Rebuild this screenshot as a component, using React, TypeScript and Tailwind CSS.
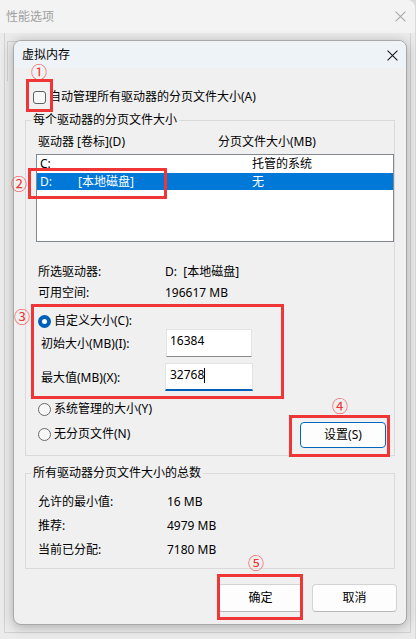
const font = "font-['Noto_Sans','Noto_Sans_CJK_SC',sans-serif]";

function Radio({ checked }: { checked?: boolean }) {
  if (checked) {
    return (
      <span className="w-[13px] h-[13px] rounded-full bg-[#005fb8] flex items-center justify-center shrink-0">
        <span className="w-[5px] h-[5px] rounded-full bg-white" />
      </span>
    );
  }
  return <span className="w-[13px] h-[13px] rounded-full border border-[#6a6a6a] bg-[#f7f7f7] shrink-0" />;
}

function CloseIcon({ color, size }: { color: string; size: number }) {
  return (
    <svg width={size} height={size} viewBox="0 0 10 10">
      <path d="M0.5 0.5 L9.5 9.5 M9.5 0.5 L0.5 9.5" stroke={color} strokeWidth="1" />
    </svg>
  );
}

function Mark({ className }: { className: string }) {
  return <div className={`absolute border-[3px] border-[#ef3535] ${className}`} />;
}

function Num({ className, n }: { className: string; n: string }) {
  return (
    <div className={`absolute font-['Noto_Sans_CJK_SC',sans-serif] text-[16px] leading-[13px] text-[#ef3535] ${className}`}>
      {n}
    </div>
  );
}

const info = [
  ["允许的最小值:", "16 MB"],
  ["推荐:", "4979 MB"],
  ["当前已分配:", "7180 MB"],
];

export default function App() {
  return (
    <div className={`relative w-[416px] h-[639px] overflow-hidden bg-[#d9d9d9] text-[12px] leading-[16px] text-black ${font}`}>
      {/* background window: 性能选项 */}
      <div className="w-[415px] h-full rounded-tr-[8px] bg-[#ebebeb] flex flex-col">
        <div className="h-[33px] bg-[#f3f3f3] rounded-tr-[8px] flex items-center justify-between pl-[6px] pr-[9px]">
          <span className="text-[#a0a0a0]">性能选项</span>
          <CloseIcon color="#a8a8a8" size={11} />
        </div>
        <div className="flex-1 px-[4px] pb-[6px]">
          <div className="h-full border-l border-b border-r border-[#d2d2d2] pt-[8px] pl-[2px]">
            <div className="w-[30px] h-[40px] border-l border-t border-[#d0d0d0]" />
          </div>
        </div>
      </div>

      {/* dialog: 虚拟内存 */}
      <div className="absolute left-[13px] top-[40px] w-[394px] h-[585px] rounded-[8px] border border-[#a8a8a8] bg-[#f0f0f0] shadow-[0_2px_12px_rgba(0,0,0,0.28)] overflow-hidden flex flex-col">
        <div className="h-[27px] bg-[#eef3f8] flex items-center justify-between pl-[8px] pr-[8px] pt-[1px]">
          <span className="leading-[12px]">虚拟内存</span>
          <CloseIcon color="#1a1a1a" size={11} />
        </div>

        <div className="flex items-center mt-[21px] ml-[19px] h-[16px]">
          <span className="w-[13px] h-[13px] rounded-[3px] border border-[#5f5f5f] bg-[#f7f7f7]" />
          <span className="ml-[3px]">自动管理所有驱动器的分页文件大小(A)</span>
        </div>

        <fieldset className="mt-[7px] mx-[11px] border border-[#dadada] pl-[5px] pb-[7px]">
          <legend className="px-[2px] leading-[16px]">每个驱动器的分页文件大小</legend>
          <div className="flex mt-[6px] ml-[7px]">
            <span className="w-[180px]">驱动器 [卷标](D)</span>
            <span>分页文件大小(MB)</span>
          </div>
          <div className="mt-[4px] ml-[5px] h-[88px] border border-[#828790] bg-white">
            <div className="flex h-[18px] items-center pl-[3px]">
              <span className="w-[212px]">C:</span>
              <span>托管的系统</span>
            </div>
            <div className="flex h-[17px] items-center pl-[3px] bg-[#0078d7] text-white">
              <span className="w-[38px]">D:</span>
              <span className="w-[174px]">[本地磁盘]</span>
              <span>无</span>
            </div>
          </div>

          <div className="flex mt-[22px] ml-[7px]">
            <span className="w-[127px]">所选驱动器:</span>
            <span>D:&nbsp;&nbsp;[本地磁盘]</span>
          </div>
          <div className="flex mt-[5px] ml-[7px]">
            <span className="w-[127px]">可用空间:</span>
            <span>196617 MB</span>
          </div>

          <div className="flex items-end justify-between">
            <div className="flex flex-col pb-[6px]">
              <div className="flex items-center mt-[12px] ml-[7px] h-[16px]">
                <Radio checked />
                <span className="ml-[3px]">自定义大小(C):</span>
              </div>
              <div className="flex items-center ml-[10px] h-[28px]">
                <span className="w-[125px] pt-[2px]">初始大小(MB)(I):</span>
                <div className="w-[86px] h-[28px] bg-white border border-[#e3e3e3] border-b-[#8a8a8a] pl-[3px] pt-[3px]">16384</div>
              </div>
              <div className="flex items-center ml-[10px] h-[28px] mt-[6px]">
                <span className="w-[125px] pt-[2px]">最大值(MB)(X):</span>
                <div className="w-[88px] -ml-[1px] h-[28px] bg-white border border-[#e3e3e3] border-b-2 border-b-[#005fb8] pl-[4px] pt-[3px] flex items-start">
                  32768
                  <span className="w-[1px] h-[15px] bg-black mt-[1px]" />
                </div>
              </div>
              <div className="flex items-center mt-[10px] ml-[7px] h-[16px]">
                <Radio />
                <span className="ml-[3px]">系统管理的大小(Y)</span>
              </div>
              <div className="flex items-center mt-[9px] ml-[7px] h-[16px]">
                <Radio />
                <span className="ml-[3px]">无分页文件(N)</span>
              </div>
            </div>
            <button className="mr-[8px] w-[86px] h-[26px] rounded-[4px] border border-[#0067c0] bg-[#fdfdfd] flex items-center justify-center">
              设置(S)
            </button>
          </div>
        </fieldset>

        <fieldset className="mt-[9px] mx-[11px] border border-[#dadada] pl-[5px] pb-[10px]">
          <legend className="px-[2px] leading-[16px]">所有驱动器分页文件大小的总数</legend>
          <div className="flex flex-col gap-[8px] mt-[13px] ml-[7px]">
            {info.map(([k, v]) => (
              <div key={k} className="flex">
                <span className="w-[129px]">{k}</span>
                <span>{v}</span>
              </div>
            ))}
          </div>
        </fieldset>

        <div className="flex justify-end gap-[9px] mt-[15px] mr-[9px]">
          <button className="w-[85px] h-[28px] rounded-[4px] border border-[#d3d3d3] border-b-[#b8b8b8] bg-[#fdfdfd] flex items-center justify-center">确定</button>
          <button className="w-[85px] h-[28px] rounded-[4px] border border-[#d3d3d3] border-b-[#b8b8b8] bg-[#fdfdfd] flex items-center justify-center">取消</button>
        </div>
      </div>

      {/* annotations */}
      <Mark className="left-[26px] top-[79px] w-[27px] h-[33px]" />
      <Num className="left-[31px] top-[65px]" n="①" />
      <Mark className="left-[28px] top-[168px] w-[139px] h-[31px]" />
      <Num className="left-[11px] top-[177px]" n="②" />
      <Mark className="left-[31px] top-[304px] w-[253px] h-[95px]" />
      <Num className="left-[14px] top-[310px]" n="③" />
      <Mark className="left-[289px] top-[415px] w-[101px] h-[42px]" />
      <Num className="left-[332px] top-[399px]" n="④" />
      <Mark className="left-[217px] top-[574px] w-[86px] h-[46px]" />
      <Num className="left-[248px] top-[556px]" n="⑤" />
    </div>
  );
}
